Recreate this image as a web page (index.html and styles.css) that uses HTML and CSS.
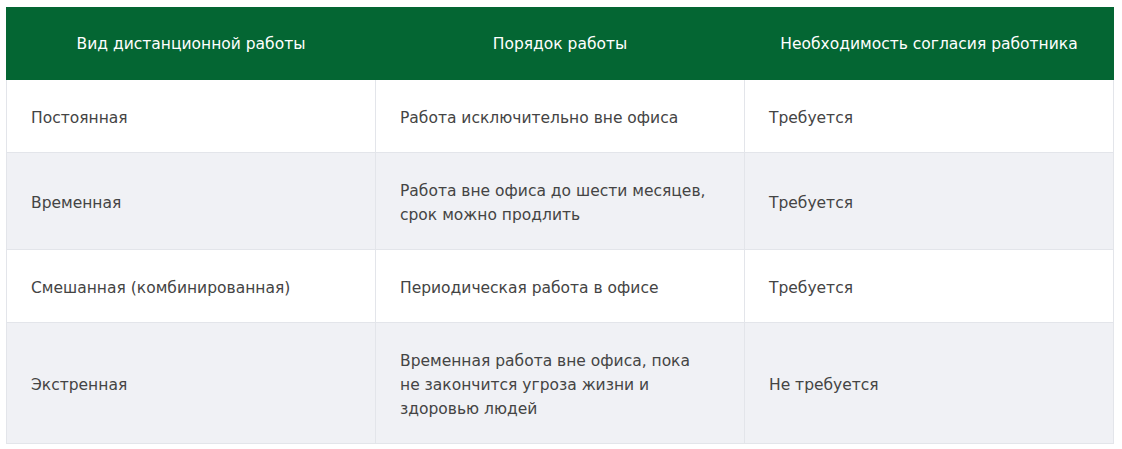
FILE: index.html
```html
<!DOCTYPE html>
<html lang="ru">
<head>
<meta charset="utf-8">
<link rel="stylesheet" href="styles.css">
</head>
<body>
<table class="tbl">
  <thead>
    <tr>
      <th>Вид дистанционной работы</th>
      <th>Порядок работы</th>
      <th>Необходимость согласия работника</th>
    </tr>
  </thead>
  <tbody>
    <tr>
      <td>Постоянная</td>
      <td>Работа исключительно вне офиса</td>
      <td>Требуется</td>
    </tr>
    <tr class="alt">
      <td>Временная</td>
      <td>Работа вне офиса до шести месяцев,<br>срок можно продлить</td>
      <td>Требуется</td>
    </tr>
    <tr>
      <td>Смешанная (комбинированная)</td>
      <td>Периодическая работа в офисе</td>
      <td>Требуется</td>
    </tr>
    <tr class="alt">
      <td>Экстренная</td>
      <td>Временная работа вне офиса, пока<br>не закончится угроза жизни и<br>здоровью людей</td>
      <td>Не требуется</td>
    </tr>
  </tbody>
</table>
</body>
</html>
```

FILE: styles.css
```css
html, body {
  margin: 0;
  padding: 0;
  background: #ffffff;
}
body {
  padding: 7px 8px 0 6px;
  font-family: "DejaVu Sans", Verdana, sans-serif;
  font-size: 15.5px;
  color: #444444;
}
.tbl {
  width: 1108px;
  border-collapse: collapse;
  table-layout: fixed;
}
.tbl th {
  background: #046633;
  color: #ffffff;
  font-weight: normal;
  text-align: center;
  height: 71px;
  padding: 0 12px;
  line-height: 24px;
  border: 1px solid #046633;
}
.tbl td {
  padding: 26px 24px 22px;
  line-height: 24px;
  border: 1px solid #e3e5ea;
  vertical-align: middle;
  text-align: left;
}
.tbl tr.alt td {
  background: #f0f1f5;
}
```
